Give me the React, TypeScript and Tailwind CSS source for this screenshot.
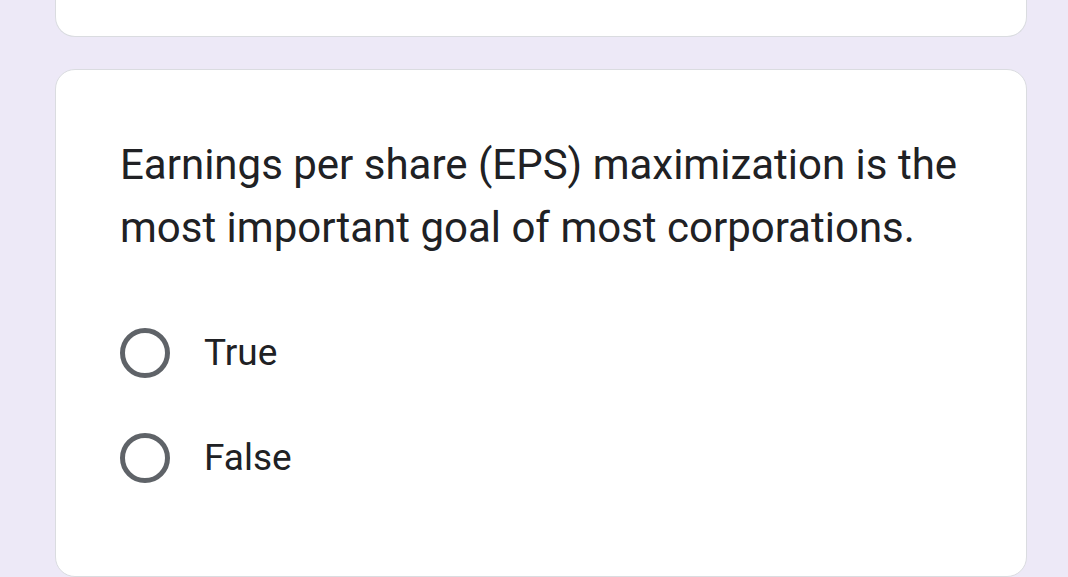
export default function App() {
  const options = ["True", "False"];
  return (
    <div className="min-h-[577px] w-full bg-[#ede9f7] pl-[55px] pr-[41px] font-['Roboto',sans-serif] text-[#202124]">
      <div className="h-[37px] rounded-b-[20px] border-x border-b border-[#dadce0] bg-white" />
      <div className="mt-[32px] h-[508px] rounded-[20px] border border-[#dadce0] bg-white pl-[64px] pt-[63px]">
        <p className="text-[42px] leading-[63px]">
          Earnings per share (EPS) maximization is the
          <br />
          most important goal of most corporations.
        </p>
        <div className="mt-[68px] flex flex-col gap-[53px]">
          {options.map((o) => (
            <label key={o} className="flex h-[52px] items-center gap-[34px]">
              <span className="h-[50px] w-[50px] rounded-full border-[5px] border-[#5f6368]" />
              <span className="text-[37px]">{o}</span>
            </label>
          ))}
        </div>
      </div>
    </div>
  );
}
